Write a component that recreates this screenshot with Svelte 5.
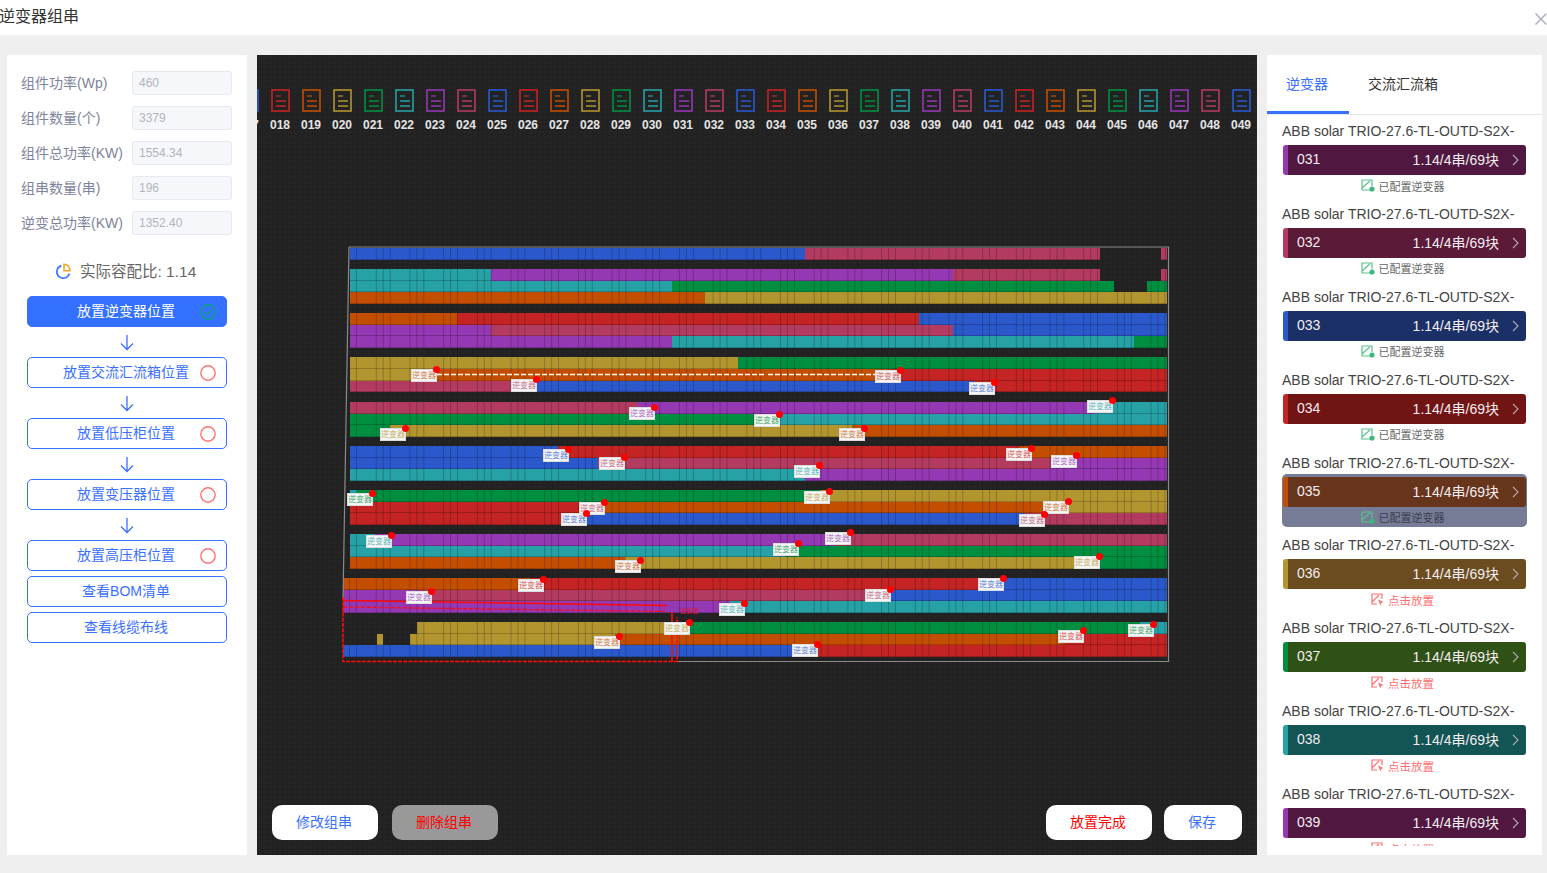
<script>
  // Inverter string placement view: settings, plan canvas, inverter list.
  const palette = {
    r: '#c42424', o: '#c44e00', g: '#b39530', e: '#008f40',
    t: '#26a1a6', p: '#9538b3', s: '#b33b5f', b: '#2b59cc'
  };
  const cycle = ['r', 'o', 'g', 'e', 't', 'p', 's', 'b'];

  const fields = [
    ['组件功率(Wp)', '460'],
    ['组件数量(个)', '3379'],
    ['组件总功率(KW)', '1554.34'],
    ['组串数量(串)', '196'],
    ['逆变总功率(KW)', '1352.40']
  ];

  const steps = [
    { text: '放置逆变器位置', state: 'done', arrow: true },
    { text: '放置交流汇流箱位置', state: 'todo', arrow: true },
    { text: '放置低压柜位置', state: 'todo', arrow: true },
    { text: '放置变压器位置', state: 'todo', arrow: true },
    { text: '放置高压柜位置', state: 'todo' },
    { text: '查看BOM清单' },
    { text: '查看线缆布线' }
  ];

  // top strip of string icons, 017 is half scrolled out
  const strings = Array.from({ length: 33 }, (_, i) => ({
    id: String(17 + i).padStart(3, '0'),
    color: palette[cycle[(i + 7) % 8]]
  }));

  // [top, height, [x0, x1, colour], ...]
  const rows = [
    [248, 12, [350, 805, 'b'], [805, 1100, 's'], [1161, 1167, 's']],
    [269, 11.5, [350, 491, 't'], [491, 953, 'p'], [953, 1100, 's'], [1161, 1167, 's']],
    [280.5, 11.5, [350, 672, 't'], [672, 1114, 'e'], [1147, 1167, 'e']],
    [292, 12, [350, 705, 'o'], [705, 1167, 'g']],
    [313, 11.5, [350, 457, 'o'], [457, 919, 'r'], [919, 1167, 'b']],
    [324.5, 11.5, [350, 491, 'p'], [491, 953, 's'], [953, 1167, 'b']],
    [336, 12, [350, 672, 'p'], [672, 1134, 't'], [1134, 1167, 'e']],
    [357, 12, [350, 738, 'g'], [738, 1167, 'e']],
    [369, 11.5, [350, 420, 'g'], [420, 890, 'o'], [890, 1167, 'r']],
    [380.5, 11.5, [350, 530, 's'], [530, 975, 'b'], [975, 1167, 'r']],
    [402, 11.5, [350, 638, 's'], [638, 1095, 'p'], [1095, 1167, 't']],
    [413.5, 11.5, [350, 765, 'e'], [765, 1167, 't']],
    [425, 11.5, [350, 390, 'e'], [390, 852, 'g'], [852, 1167, 'o']],
    [446, 11.5, [350, 558, 'b'], [558, 1020, 'r'], [1020, 1167, 'o']],
    [457.5, 11.5, [350, 598, 'b'], [598, 1050, 's'], [1050, 1167, 'p']],
    [469, 11.5, [350, 805, 't'], [805, 1167, 'p']],
    [490, 11.5, [350, 357, 't'], [357, 820, 'e'], [820, 1167, 'g']],
    [501.5, 11.5, [350, 590, 'r'], [590, 1045, 'o'], [1045, 1167, 'g']],
    [513, 12, [350, 570, 'r'], [570, 1025, 'b'], [1025, 1167, 's']],
    [534, 11.5, [350, 375, 't'], [375, 835, 'p'], [835, 1167, 's']],
    [545.5, 11.5, [350, 785, 't'], [785, 1167, 'e']],
    [557, 12, [350, 625, 'o'], [625, 1075, 'g'], [1075, 1167, 'e']],
    [578, 11.5, [343, 530, 'o'], [530, 990, 'r'], [990, 1167, 'b']],
    [589.5, 11.5, [343, 420, 'p'], [420, 880, 's'], [880, 1167, 'b']],
    [601, 12, [343, 730, 'p'], [730, 1167, 't']],
    [622, 11.5, [417, 680, 'g'], [680, 1140, 'e'], [1140, 1167, 't']],
    [633.5, 11.5, [377, 383, 'g'], [410, 615, 'g'], [615, 1065, 'o'], [1065, 1167, 'r']],
    [645, 12, [343, 805, 'b'], [805, 1167, 'r']]
  ];

  const segments = rows.flatMap(([top, height, ...parts]) =>
    parts.map(([x0, x1, c]) => ({ top, height, x0, width: x1 - x0, color: palette[c] }))
  );

  // inverter tags: centre x, centre y, ink
  const tags = [
    [424, 375, 'o'], [524, 385, 's'], [888, 376, 'r'], [982, 388, 'b'],
    [642, 413, 'p'], [767, 420, 'e'], [1100, 406, 't'], [852, 434, 'o'],
    [393, 434, 'g'], [556, 455, 'b'], [612, 463, 's'], [807, 471, 't'],
    [1019, 454, 'r'], [1064, 461, 'p'], [360, 499, 'e'], [817, 497, 'g'],
    [592, 508, 's'], [574, 519, 'b'], [1056, 507, 'o'], [1032, 520, 's'],
    [379, 541, 't'], [786, 549, 'e'], [838, 538, 'p'], [1087, 562, 'g'],
    [628, 566, 'o'], [531, 585, 'r'], [419, 597, 'p'], [991, 584, 'b'],
    [878, 595, 's'], [732, 609, 't'], [677, 628, 'g'], [607, 642, 'o'],
    [1071, 636, 'r'], [1141, 630, 'e'], [805, 650, 'b']
  ];

  const inverters = [
    { id: '031', band: 'p', bar: '#501840', placed: true },
    { id: '032', band: 's', bar: '#5a1a38', placed: true },
    { id: '033', band: 'b', bar: '#1b3066', placed: true },
    { id: '034', band: 'r', bar: '#701414', placed: true },
    { id: '035', band: 'o', bar: '#67341c', placed: true, hover: true },
    { id: '036', band: 'g', bar: '#6a4c1e' },
    { id: '037', band: 'e', bar: '#2f5116' },
    { id: '038', band: 't', bar: '#135454' },
    { id: '039', band: 'p', bar: '#501840' }
  ];
</script>

<header class="top">
  <span class="top__title">逆变器组串</span>
  <svg class="top__close" width="14" height="14" viewBox="0 0 14 14" aria-hidden="true">
    <path d="M1.5 1.5 12.5 12.5M12.5 1.5 1.5 12.5" stroke="#a9afbd" stroke-width="1.5" fill="none" />
  </svg>
</header>

<main class="page">
  <aside class="side">
    {#each fields as [label, value]}
      <div class="field">
        <span class="field__label">{label}</span>
        <span class="field__input">{value}</span>
      </div>
    {/each}

    <div class="ratio">
      <svg width="16" height="17" viewBox="0 0 16 17" aria-hidden="true">
        <path d="M6.5 2.6A6.4 6.4 0 1 0 14.4 10.5" fill="none" stroke="#3f7bff" stroke-width="1.7" />
        <path d="M9 1.2A6.2 6.2 0 0 1 15 7.8H9Z" fill="#fff" stroke="#f5a623" stroke-width="1.6" />
      </svg>
      <span class="ratio__text">实际容配比: 1.14</span>
    </div>

    <div class="steps">
      {#each steps as step}
        <button type="button" class="step" class:step--active={step.state === 'done'}>
          {step.text}
          {#if step.state === 'done'}
            <svg class="step__mark" width="16" height="16" viewBox="0 0 16 16" aria-hidden="true">
              <circle cx="8" cy="8" r="7.2" fill="none" stroke="#0ea27a" stroke-width="1.4" />
              <path d="M4.6 8.2 7.2 10.6 11.4 5.8" fill="none" stroke="#0ea27a" stroke-width="1.4" />
            </svg>
          {:else if step.state === 'todo'}
            <svg class="step__mark" width="16" height="16" viewBox="0 0 16 16" aria-hidden="true">
              <circle cx="8" cy="8" r="7.2" fill="none" stroke="#ff7472" stroke-width="1.4" />
            </svg>
          {/if}
        </button>
        {#if step.arrow}
          <svg class="step__arrow" width="14" height="30" viewBox="0 0 14 30" aria-hidden="true">
            <path d="M7 8V22.5M1 16.5 7 22.5 13 16.5" fill="none" stroke="#3a70ff" stroke-width="1.3" />
          </svg>
        {/if}
      {/each}
    </div>
  </aside>

  <section class="board">
    <div class="strip">
      {#each strings as s}
        <div class="strip__item">
          <svg width="19" height="23" viewBox="0 0 19 23" aria-hidden="true">
            <g fill="none" stroke={s.color}>
              <rect x="1" y="1" width="17" height="21" stroke-width="1.6" />
              <path d="M5 7H10" stroke-width="1.2" />
              <path d="M5 12H15M5 17H15" stroke-width="1.6" />
            </g>
          </svg>
          <span>{s.id}</span>
        </div>
      {/each}
    </div>

    {#each segments as seg}
      <div
        class="seg"
        style="left:{seg.x0 - 257}px;top:{seg.top - 55}px;width:{seg.width}px;height:{seg.height}px;background-color:{seg.color};background-position-x:{350 - seg.x0}px"
      ></div>
    {/each}

    <svg class="plan" width="1000" height="800" viewBox="257 55 1000 800" aria-hidden="true">
      <path d="M349 247H1168.5V661.5H677M349 247 343 600" fill="none" stroke="#8a8a8a" stroke-width="1.2" />
      <path d="M437 374.5H650M654 374.5H764M768 374.5H875" stroke="#fff" stroke-width="1.4" stroke-dasharray="5 2" fill="none" />
      <g fill="none" stroke="#ff0a0a">
        <path d="M343 600.5 667 605.5" stroke-width="1.5" />
        <path d="M343 607 666 611.5" stroke-width="1.3" stroke-dasharray="4 2" />
        <path d="M343 597V661.5H677V617" stroke-width="1.6" stroke-dasharray="4 1.2" />
        <path d="M672 612V662" stroke-width="1.6" />
      </g>
      <text x="680" y="613" class="plan__ghost">逆变器</text>
    </svg>

    {#each tags as [x, y, ink]}
      <div class="tag" style="left:{x - 13 - 257}px;top:{y - 6.5 - 55}px;color:{palette[ink]}">
        <span class="tag__text">逆变器</span>
        <i class="tag__dot"></i>
      </div>
    {/each}

    <div class="board__actions">
      <div class="board__group">
        <button type="button" class="pill pill--blue">修改组串</button>
        <button type="button" class="pill pill--off">删除组串</button>
      </div>
      <div class="board__group">
        <button type="button" class="pill pill--red">放置完成</button>
        <button type="button" class="pill pill--blue pill--small">保存</button>
      </div>
    </div>
  </section>

  <aside class="list">
    <div class="tabs">
      <span class="tab tab--on">逆变器</span>
      <span class="tab">交流汇流箱</span>
    </div>
    <div class="list__body">
      {#each inverters as inv}
        <div class="inv">
          <div class="inv__name">ABB solar TRIO-27.6-TL-OUTD-S2X-</div>
          <div class="inv__card" class:inv__card--hover={inv.hover}>
            <div class="inv__bar" style="background:{inv.bar};border-left-color:{palette[inv.band]}">
              <span class="inv__id">{inv.id}</span>
              <span class="inv__info">1.14/4串/69块</span>
              <svg class="inv__chev" width="7" height="12" viewBox="0 0 7 12" aria-hidden="true">
                <path d="M1 1 6 6 1 11" fill="none" stroke="#b4a9b0" stroke-width="1.1" />
              </svg>
            </div>
            {#if inv.placed}
              <div class="inv__state inv__state--ok">
                <svg width="14" height="13" viewBox="0 0 14 13" aria-hidden="true">
                  <path d="M9 11H1V1H11V7M1 9 9 2" fill="none" stroke="#5cc08d" stroke-width="1.2" />
                  <circle cx="11" cy="10" r="2.6" fill="#3fb77a" />
                </svg>
                <span>已配置逆变器</span>
              </div>
            {:else}
              <div class="inv__state inv__state--todo">
                <svg width="13" height="13" viewBox="0 0 13 13" aria-hidden="true">
                  <path d="M6 11H1V1H11V6M1 9 8 2" fill="none" stroke="#ff6f6f" stroke-width="1.2" />
                  <path d="M7 6.5 12.5 9 10.2 10 9.4 12.5Z" fill="#ff6f6f" />
                </svg>
                <span>点击放置</span>
              </div>
            {/if}
          </div>
        </div>
      {/each}
    </div>
  </aside>
</main>

<style>
  :global(body) {
    background: #efefef;
    overflow: hidden;
  }

  header, main, button {
    font-family: "Liberation Sans", "Noto Sans CJK SC", sans-serif;
  }

  .top {
    height: 35px;
    background: #fff;
    display: flex;
    align-items: center;
    justify-content: space-between;
    overflow: hidden;
  }
  .top__title {
    font-size: 16px;
    color: #333;
    margin-left: -1px;
    margin-top: -5px;
  }
  .top__close {
    margin-right: -1px;
    margin-top: 2px;
  }

  .page {
    display: flex;
    gap: 10px;
    height: 800px;
    padding: 20px 5px 0 7px;
    background: #efefef;
  }

  /* left settings column */
  .side {
    width: 240px;
    flex: none;
    background: #fff;
    padding: 16px 15px 0 15px;
    box-sizing: border-box;
  }
  .field {
    display: flex;
    align-items: center;
    height: 24px;
    margin-bottom: 11px;
  }
  .field__label {
    width: 110px;
    flex: none;
    margin-left: -1px;
    margin-right: 1px;
    padding-bottom: 3px;
    font-size: 14px;
    color: #7d849b;
    white-space: nowrap;
  }
  .field__input {
    width: 100px;
    height: 24px;
    box-sizing: border-box;
    padding-left: 6px;
    line-height: 22px;
    font-size: 12px;
    color: #b2b5bc;
    background: #f5f7fa;
    border: 1px solid #e6e9f0;
    border-radius: 3px;
  }
  .ratio {
    margin-top: 25px;
    height: 22px;
    display: flex;
    align-items: center;
    gap: 9px;
    padding-left: 33px;
    white-space: nowrap;
  }
  .ratio__text {
    padding-bottom: 2px;
    font-size: 15.5px;
    color: #666;
  }
  .steps {
    margin: 14px 0 0 5px;
    width: 200px;
    display: flex;
    flex-direction: column;
    align-items: center;
    gap: 5px;
  }
  .step {
    position: relative;
    width: 200px;
    height: 31px;
    padding: 0 2px 3px 0;
    font-size: 14px;
    color: #3a70ff;
    background: #fff;
    border: 1px solid #3a70ff;
    border-radius: 5px;
  }
  .step--active {
    background: #3370ff;
    color: #fff;
  }
  .step__mark {
    position: absolute;
    right: 10px;
    top: 6.5px;
  }
  .step__arrow {
    margin: -5px 0;
  }

  /* plan canvas */
  .board {
    position: relative;
    width: 1000px;
    flex: none;
    overflow: hidden;
    background-color: #242424;
    background-image:
      repeating-linear-gradient(90deg, #202020 0 1px, transparent 1px 5px),
      repeating-linear-gradient(0deg, #202020 0 1px, transparent 1px 5px);
  }
  .strip {
    position: absolute;
    left: -23.5px;
    top: 34px;
    display: flex;
    gap: 0;
  }
  .strip__item {
    width: 31px;
    flex: none;
    display: flex;
    flex-direction: column;
    align-items: center;
    gap: 6px;
    font-size: 12px;
    font-weight: 700;
    line-height: 14px;
    color: #e4e4e4;
  }
  .strip__item svg {
    display: block;
  }
  .seg {
    position: absolute;
    background-image: linear-gradient(90deg,
      transparent 0 6px, rgba(0, 0, 0, 0.22) 6px 7px,
      transparent 7px 26px, rgba(0, 0, 0, 0.22) 26px 27px,
      transparent 27px 33px, rgba(0, 0, 0, 0.22) 33px 33.7px);
    background-size: 33.7px 100%;
    box-shadow: inset 0 -1px 0 rgba(0, 0, 0, 0.2);
  }
  .plan {
    position: absolute;
    left: 0;
    top: 0;
  }
  .plan__ghost {
    font-size: 6px;
    fill: #d61a2c;
  }
  .tag {
    position: absolute;
    width: 26px;
    height: 13px;
    box-sizing: border-box;
    background: #f6f6f6;
    border: 1px solid #ddd;
    font-size: 8px;
    line-height: 11px;
    text-align: center;
    white-space: nowrap;
  }
  .tag__text {
    opacity: 0.75;
  }
  .tag__dot {
    position: absolute;
    right: -4px;
    top: -4px;
    width: 7px;
    height: 7px;
    border-radius: 50%;
    background: #f00;
  }
  .board__actions {
    position: absolute;
    left: 15px;
    right: 15px;
    bottom: 15px;
    display: flex;
    justify-content: space-between;
  }
  .board__group {
    display: flex;
    gap: 12px;
  }
  .board__group:first-child {
    gap: 14px;
  }
  .pill {
    width: 106px;
    height: 35px;
    padding: 0 2px 3px 0;
    border: 0;
    border-radius: 10px;
    background: #fff;
    font-size: 14px;
  }
  .pill--small { width: 78px; }
  .pill--blue { color: #3a70ff; }
  .pill--red { color: #f00; }
  .pill--off { background: #999; color: #f00; }

  /* right inverter list */
  .list {
    width: 275px;
    flex: none;
    background: #fff;
    overflow: hidden;
  }
  .list__body {
    height: 731px;
    overflow: hidden;
  }
  .tabs {
    height: 60px;
    box-sizing: border-box;
    display: flex;
    border-bottom: 1px solid #e4e7ed;
  }
  .tab {
    height: 59px;
    box-sizing: border-box;
    padding: 0 21px 0 19px;
    line-height: 58px;
    font-size: 14px;
    color: #333;
  }
  .tab--on {
    color: #3a70ff;
    border-bottom: 3px solid #3a70ff;
  }
  .inv {
    height: 82.9px;
    padding: 0 15px;
  }
  .inv__name {
    padding: 6px 0 1px;
    line-height: 20px;
    font-size: 14px;
    color: #444;
    white-space: nowrap;
  }
  .inv__card {
    width: 245px;
    height: 53px;
    box-sizing: border-box;
    padding: 3px 1px 0;
    border-radius: 5px;
  }
  .inv__card--hover {
    background: #767c95;
  }
  .inv__bar {
    display: flex;
    align-items: center;
    height: 30px;
    box-sizing: border-box;
    border-left: 5px solid;
    border-radius: 3px;
    padding-left: 9px;
    padding-bottom: 2px;
    font-size: 14px;
    color: #f4eef2;
  }
  .inv__info {
    margin-left: auto;
  }
  .inv__chev {
    margin: 2px 7px 0 13px;
  }
  .inv__state {
    height: 20px;
    padding: 1px 4px 0 0;
    box-sizing: border-box;
    display: flex;
    align-items: center;
    justify-content: center;
    gap: 4px;
    font-size: 11px;
  }
  .inv__state--ok { color: #666; }
  .inv__state--todo { color: #ff6f6f; font-size: 11.5px; }
  .inv__card--hover .inv__state--ok { color: #3a3f52; }
</style>
